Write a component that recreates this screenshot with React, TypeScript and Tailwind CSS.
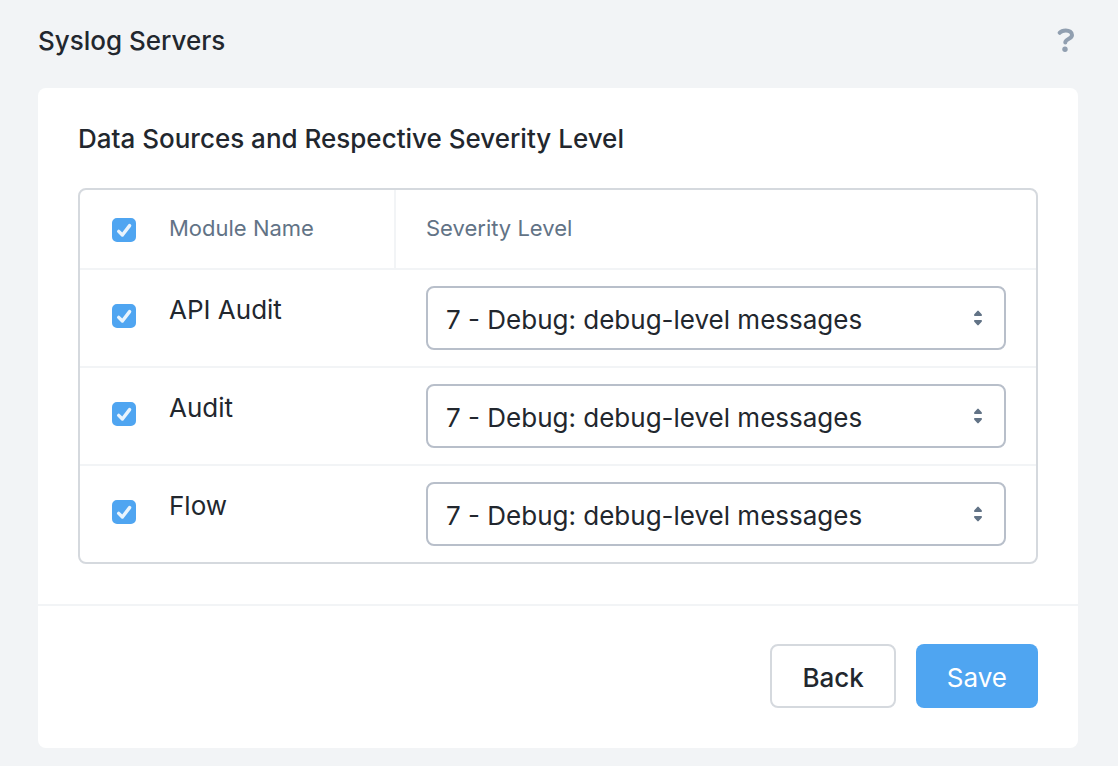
import { useState } from "react";

const MODULES = ["API Audit", "Audit", "Flow"];

const LEVELS = [
  { value: 7, label: "7 - Debug: debug-level messages" },
  { value: 6, label: "6 - Informational: informational messages" },
  { value: 5, label: "5 - Notice: normal but significant condition" },
  { value: 4, label: "4 - Warning: warning conditions" },
  { value: 3, label: "3 - Error: error conditions" },
];

type CheckboxProps = {
  id: string;
  label: string;
  checked: boolean;
  onChange: (checked: boolean) => void;
};

function Checkbox({ id, label, checked, onChange }: CheckboxProps) {
  return (
    <span className="grid size-6">
      <input
        id={id}
        type="checkbox"
        aria-label={label}
        checked={checked}
        onChange={(e) => onChange(e.target.checked)}
        className="peer col-start-1 row-start-1 size-6 appearance-none rounded-[5px] border-2 border-[#b8bfca] bg-white checked:border-[#4fa5f1] checked:bg-[#4fa5f1]"
      />
      <svg
        viewBox="0 0 24 24"
        aria-hidden="true"
        className="pointer-events-none invisible col-start-1 row-start-1 size-6 peer-checked:visible"
      >
        <path
          d="M6.7 13.4 10.4 17 17.6 7.6"
          fill="none"
          stroke="#e9f4fd"
          strokeWidth="3.4"
          strokeLinecap="round"
          strokeLinejoin="round"
        />
      </svg>
    </span>
  );
}

function SeveritySelect({ label }: { label: string }) {
  return (
    <div className="grid items-center">
      <select
        aria-label={label}
        defaultValue={7}
        className="col-start-1 row-start-1 h-16 w-full appearance-none rounded-lg border-2 border-[#b8bfca] bg-white pt-0.5 pr-12 pl-[18px] text-[26px] text-[#22272e]"
      >
        {LEVELS.map((level) => (
          <option key={level.value} value={level.value}>
            {level.label}
          </option>
        ))}
      </select>
      <svg
        viewBox="0 0 8 16"
        aria-hidden="true"
        className="pointer-events-none col-start-1 row-start-1 mr-6 h-4 w-2 justify-self-end"
      >
        <path
          d="M3.3.9Q4 .2 4.7.9L7.7 4.3Q8.4 6 7.2 6H.8Q-.4 6 .3 4.3ZM3.3 15.1Q4 15.8 4.7 15.1L7.7 11.7Q8.4 10 7.2 10H.8Q-.4 10 .3 11.7Z"
          fill="#627386"
        />
      </svg>
    </div>
  );
}

export default function App() {
  const [selected, setSelected] = useState<string[]>(MODULES);

  const toggle = (name: string, on: boolean) =>
    setSelected((prev) => (on ? [...prev, name] : prev.filter((n) => n !== name)));

  return (
    <div className="min-h-screen bg-[#f2f4f6] pr-10 pb-[18px] pl-[38px] font-['Inter',sans-serif] text-[#22272e]">
      <header className="flex h-[88px] items-center justify-between pb-1.5">
        <h1 className="text-[26px] leading-8 font-medium">Syslog Servers</h1>
        <button type="button" aria-label="Help" className="flex w-6 justify-center">
          <svg viewBox="0 0 18 26" aria-hidden="true" className="h-[26px] w-[18px]">
            <path
              d="M2.7 4.8C4 3.2 6.2 2.4 8.8 2.4 12.4 2.4 15 4.1 15 6.9 15 11.2 8.3 10.8 8.3 14.6"
              fill="none"
              stroke="#919fb0"
              strokeWidth="4"
              strokeLinecap="round"
            />
            <circle cx="8" cy="21.3" r="2.7" fill="#919fb0" />
          </svg>
        </button>
      </header>

      <main className="rounded-lg bg-white">
        <section className="px-10 pt-[35px] pb-10">
          <h2 className="text-[26px] leading-8 font-medium">
            Data Sources and Respective Severity Level
          </h2>
          <div className="mt-[33px] overflow-hidden rounded-lg border-2 border-[#d5d9de]">
            <table className="w-full table-fixed border-separate border-spacing-0 text-left">
              <colgroup>
                <col className="w-[89px]" />
                <col className="w-[227px]" />
                <col />
              </colgroup>
              <thead>
                <tr className="h-20 text-[22px] text-[#627386]">
                  <th className="border-b-2 border-[#f2f4f6] pt-7 pl-8 align-top font-normal">
                    <Checkbox
                      id="all-modules"
                      label="All modules"
                      checked={selected.length === MODULES.length}
                      onChange={(on) => setSelected(on ? MODULES : [])}
                    />
                  </th>
                  <th className="border-r-2 border-b-2 border-[#f2f4f6] pb-0.5 font-normal">
                    Module Name
                  </th>
                  <th className="border-b-2 border-[#f2f4f6] pb-0.5 pl-[30px] font-normal">
                    Severity Level
                  </th>
                </tr>
              </thead>
              <tbody className="[&>tr:not(:last-child)>td]:border-b-2">
                {MODULES.map((name) => (
                  <tr key={name}>
                    <td className="border-[#f2f4f6] pt-[34px] pl-8 align-top">
                      <Checkbox
                        id={name}
                        label={name}
                        checked={selected.includes(name)}
                        onChange={(on) => toggle(name, on)}
                      />
                    </td>
                    <td className="border-[#f2f4f6] pt-6 align-top text-[26px] leading-8">
                      <label htmlFor={name}>{name}</label>
                    </td>
                    <td className="border-[#f2f4f6] px-[30px] py-4">
                      <SeveritySelect label={`${name} severity level`} />
                    </td>
                  </tr>
                ))}
              </tbody>
            </table>
          </div>
        </section>

        <footer className="flex justify-end gap-5 border-t-2 border-[#f2f4f6] px-10 pt-[38px] pb-10">
          <button
            type="button"
            className="h-16 rounded-lg border-2 border-[#d5d9de] bg-white px-[30px] pt-0.5 text-[26px] font-medium"
          >
            Back
          </button>
          <button
            type="button"
            className="h-16 rounded-lg bg-[#4fa5f1] px-[31px] pt-0.5 text-[26px] text-white"
          >
            Save
          </button>
        </footer>
      </main>
    </div>
  );
}
